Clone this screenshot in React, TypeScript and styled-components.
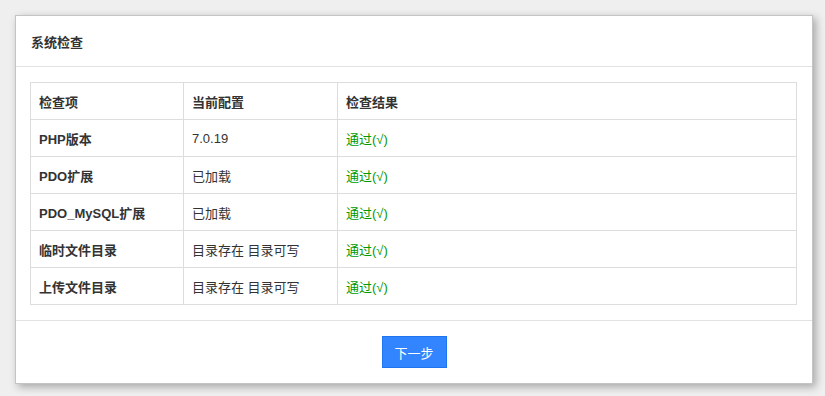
import React from "react";
import styled, { createGlobalStyle } from "styled-components";

const GlobalStyle = createGlobalStyle`
  html, body {
    margin: 0;
    padding: 0;
    background: #efefef;
  }
  body {
    font-family: "Liberation Sans", "Noto Sans CJK SC", sans-serif;
    color: #333;
  }
`;

const Page = styled.div`
  padding: 15px 12px 13px 15px;
`;

const Panel = styled.div`
  width: 796px;
  background: #fff;
  border: 1px solid #c4c4c4;
  box-shadow: 3px 3px 8px rgba(0, 0, 0, 0.3);
`;

const Header = styled.div`
  height: 50px;
  padding: 0 15px;
  display: flex;
  align-items: center;
  font-size: 13px;
  font-weight: bold;
  border-bottom: 1px solid #e2e2e2;
`;

const Body = styled.div`
  padding: 15px 15px 15px 14px;
  border-bottom: 1px solid #e2e2e2;
`;

const Table = styled.table`
  width: 100%;
  border-collapse: collapse;
  font-size: 13px;
`;

const Cell = styled.td<{ $strong?: boolean; $ok?: boolean; $w?: number }>`
  height: 36px;
  padding: 0 8px;
  border: 1px solid #dddddd;
  font-weight: ${(p) => (p.$strong ? "bold" : "normal")};
  color: ${(p) => (p.$ok ? "#009a00" : "#333")};
  width: ${(p) => (p.$w ? `${p.$w}px` : "auto")};
  text-align: left;
`;

const Footer = styled.div`
  height: 62px;
  display: flex;
  justify-content: center;
  align-items: center;
`;

const Button = styled.button`
  width: 65px;
  height: 32px;
  background: #3385ff;
  border: 1px solid #1f75f0;
  color: #fff;
  font-family: "Liberation Sans", "Noto Sans CJK SC", sans-serif;
  font-size: 13px;
  cursor: pointer;
`;

const rows = [
  ["PHP版本", "7.0.19"],
  ["PDO扩展", "已加载"],
  ["PDO_MySQL扩展", "已加载"],
  ["临时文件目录", "目录存在 目录可写"],
  ["上传文件目录", "目录存在 目录可写"],
];

export default function App() {
  return (
    <Page>
      <GlobalStyle />
      <Panel>
        <Header>系统检查</Header>
        <Body>
          <Table>
            <tbody>
              <tr>
                <Cell as="th" $strong $w={136}>检查项</Cell>
                <Cell as="th" $strong $w={137}>当前配置</Cell>
                <Cell as="th" $strong>检查结果</Cell>
              </tr>
              {rows.map(([name, value]) => (
                <tr key={name}>
                  <Cell $strong>{name}</Cell>
                  <Cell>{value}</Cell>
                  <Cell $ok>通过(√)</Cell>
                </tr>
              ))}
            </tbody>
          </Table>
        </Body>
        <Footer>
          <Button>下一步</Button>
        </Footer>
      </Panel>
    </Page>
  );
}
